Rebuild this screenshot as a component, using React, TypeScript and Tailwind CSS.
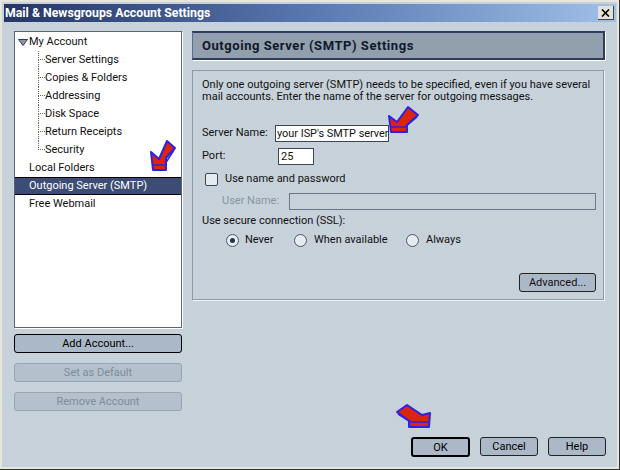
import React from 'react';

const font = "font-['Roboto','Liberation_Sans',Arial,sans-serif]";

// red pointer arrows painted over the dialog
const Arrow = ({ className, w, h, body, band }: { className: string, w: number, h: number, body: string, band: string[] }) => (
    <svg className={`absolute ${className}`} width={w} height={h} viewBox={`0 0 ${w} ${h}`}>
        <polygon points={body} fill="#dc2408" stroke="#2a22e6" strokeWidth="2" strokeLinejoin="round" />
        {band.map((b) => <polyline key={b} points={b} fill="none" stroke="#2a22e6" strokeWidth="1.5" />)}
    </svg>
);

const TreeChild = ({ label, last }: { label: string, last?: boolean }) => (
    <div className="flex h-[18px] items-stretch pl-[23px]">
        <div className="w-[7px] flex flex-col">
            <div className="h-[9px] border-l border-b border-dotted border-[#666]" />
            {!last && <div className="h-[9px] border-l border-dotted border-[#666]" />}
        </div>
        <span className="leading-[17px]">{label}</span>
    </div>
);

const SideButton = ({ label, disabled }: { label: string, disabled?: boolean }) => (
    <button className={`w-[168px] h-[19px] rounded-[3px] border leading-none ${disabled ? 'bg-[#b4c0cc] border-[#98a4b2] text-[#7e8c9c]' : 'bg-[#abb8c8] border-black text-black'}`}>
        {label}
    </button>
);

const Radio = ({ checked }: { checked?: boolean }) => (
    <span className="w-[13px] h-[13px] rounded-full border border-[#4a5566] bg-[#e6ebf0] flex items-center justify-center shrink-0">
        {checked && <span className="w-[5px] h-[5px] rounded-full bg-[#26324e]" />}
    </span>
);

const FootButton = ({ label, main, w }: { label: string, main?: boolean, w: string }) => (
    <button className={`${w} rounded-[3px] bg-[#abb8c8] text-black leading-none ${main ? 'h-[20px] border-2 border-black' : 'h-[19px] border border-[#222]'}`}>
        {label}
    </button>
);

export default function App() {
    return (
        <div className="w-[620px] h-[470px] overflow-hidden border-r border-b border-[#333]">
            <div className={`relative h-full bg-[repeating-conic-gradient(#cad4dc_0_25%,#c5cfd8_0_50%)] bg-[length:2px_2px] text-[11px] text-[#111] ${font} border-2 border-[#e8e6dc]`}>
                {/* title bar */}
                <div className="ml-[2px] mr-[1px] mt-[2px] h-[18px] flex items-center justify-between pl-px pr-[2px] bg-gradient-to-r from-[#263565] via-[#5878b0] to-[#a0c0e8]">
                    <span className="text-white font-bold text-[12.3px]">Mail &amp; Newsgroups Account Settings</span>
                    <span className="w-[16px] h-[14px] bg-[#e4e2d8] border-r border-b border-[#444] flex items-center justify-center">
                        <svg width="9" height="8" viewBox="0 0 9 8">
                            <path d="M1 0.5 L8 7.5 M8 0.5 L1 7.5" stroke="#000" strokeWidth="1.6" />
                        </svg>
                    </span>
                </div>

                <div className="flex pl-[12px] pt-[9px] gap-[10px] h-[445px]">
                    {/* left column */}
                    <div className="w-[168px] flex flex-col">
                        <div className="h-[297px] bg-white border border-[#5a6678] shadow-[1px_1px_0_#fff] pt-px">
                            <div className="h-[18px] flex items-center pl-[3px]">
                                <svg width="10" height="7" viewBox="0 0 10 7" className="mr-px">
                                    <polygon points="0.5,0.5 9.5,0.5 5,6.5" fill="#8c98a8" stroke="#333a55" />
                                </svg>
                                <span>My Account</span>
                            </div>
                            <TreeChild label="Server Settings" />
                            <TreeChild label="Copies & Folders" />
                            <TreeChild label="Addressing" />
                            <TreeChild label="Disk Space" />
                            <TreeChild label="Return Receipts" />
                            <TreeChild label="Security" last />
                            <div className="h-[18px] leading-[17px] pl-[14px]">Local Folders</div>
                            <div className="h-[18px] leading-[16px] pl-[14px] bg-[#3d4c74] text-white border-y border-black">Outgoing Server (SMTP)</div>
                            <div className="h-[18px] leading-[17px] pl-[14px]">Free Webmail</div>
                        </div>
                        <div className="flex flex-col gap-[10px] mt-[6px]">
                            <SideButton label="Add Account..." />
                            <SideButton label="Set as Default" disabled />
                            <SideButton label="Remove Account" disabled />
                        </div>
                    </div>

                    {/* right column */}
                    <div className="w-[414px] flex flex-col">
                        <div className="w-[413px] h-[29px] flex items-center pl-[9px] bg-[repeating-conic-gradient(#95a2b0_0_25%,#8f9cab_0_50%)] bg-[length:2px_2px] border-y-2 border-r-2 border-l border-[#2e3c60] border-l-[#5c6c8a] shadow-[1px_1px_0_#fff] font-bold text-[13px] tracking-[0.55px] text-[#10182c]">
                            Outgoing Server (SMTP) Settings
                        </div>
                        <div className="w-[412px] mt-[10px] h-[230px] border border-[#8e9aaa] shadow-[1px_1px_0_#f0f4f6] pl-[9px] pr-[7px] pt-[8px] flex flex-col">
                            <p className="leading-[12px] whitespace-nowrap">
                                Only one outgoing server (SMTP) needs to be specified, even if you have several<br />
                                mail accounts. Enter the name of the server for outgoing messages.
                            </p>
                            <div className="flex items-center mt-[22px] h-[17px]">
                                <span className="w-[73px]">Server Name:</span>
                                <span className="w-[114px] h-[17px] bg-white border border-[#3c4658] pl-px leading-[15px] text-[10.9px] whitespace-nowrap">your ISP's SMTP server</span>
                            </div>
                            <div className="flex items-center mt-[6px] h-[17px]">
                                <span className="w-[76px]">Port:</span>
                                <span className="w-[36px] h-[17px] bg-white border border-[#3c4658] pl-[2px] leading-[15px]">25</span>
                            </div>
                            <div className="flex items-center mt-[7px] h-[14px] pl-[3px]">
                                <span className="w-[13px] h-[13px] rounded-[2px] border border-[#3c4658] bg-[#e6ebf0] mr-[7px]" />
                                <span>Use name and password</span>
                            </div>
                            <div className="flex items-center mt-[7px] h-[17px] pl-[20px] text-[#8694a4]">
                                <span className="w-[67px]">User Name:</span>
                                <span className="w-[307px] h-[17px] border border-[#6c7888]" />
                            </div>
                            <div className="mt-[4px] h-[14px] leading-[14px]">Use secure connection (SSL):</div>
                            <div className="flex items-center mt-[5px] h-[14px] pl-[24px]">
                                <Radio checked />
                                <span className="ml-[6px] w-[49px]">Never</span>
                                <Radio />
                                <span className="ml-[7px] w-[92px]">When available</span>
                                <Radio />
                                <span className="ml-[7px]">Always</span>
                            </div>
                            <div className="mt-[26px] flex justify-end">
                                <button className="w-[77px] h-[19px] rounded-[3px] bg-[#abb8c8] border border-[#222] leading-none">Advanced...</button>
                            </div>
                        </div>
                        <div className="mt-auto mb-[10px] flex justify-end items-start gap-[10px]">
                            <FootButton label="OK" main w="w-[59px]" />
                            <FootButton label="Cancel" w="w-[58px]" />
                            <FootButton label="Help" w="w-[58px]" />
                        </div>
                    </div>
                </div>

                {/* arrows */}
                <Arrow className="left-[146px] top-[136px]" w={30} h={36}
                    body="3,14 11,21 19,3 27,10 18,20 18,32 5,32"
                    band={['5,27 18,27', '17,26 26,12']} />
                <Arrow className="left-[384px] top-[103px]" w={34} h={30}
                    body="3,11 11,17 22,2 32,10 21,20 21,27 5,27"
                    band={['5,22 21,22', '20,21 31,12']} />
                <Arrow className="left-[393px] top-[400px]" w={38} h={28}
                    body="2,10 12,3 27,13 35,11 34,25 14,25 14,19"
                    band={['3,12 16,20 34,20']} />
            </div>
        </div>
    );
}
